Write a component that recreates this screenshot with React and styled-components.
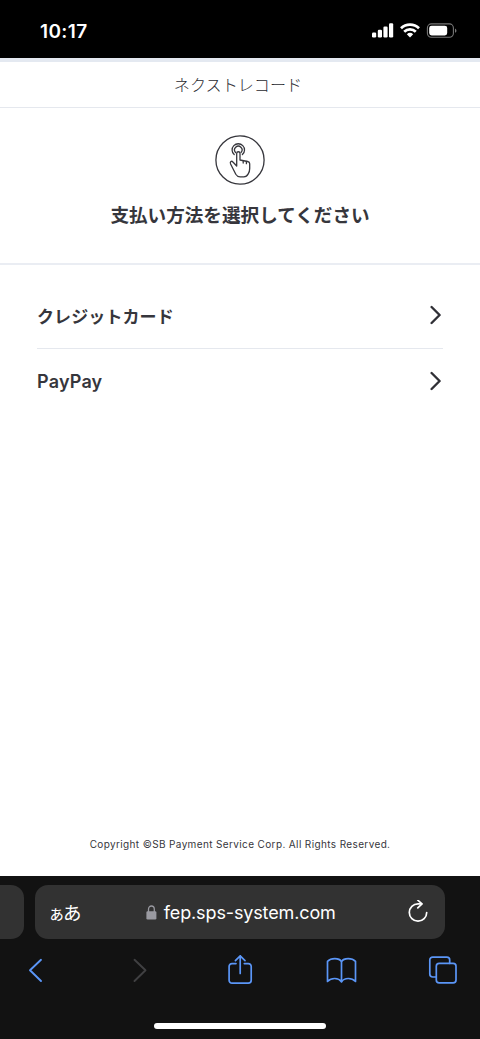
import React from 'react';
import styled, { createGlobalStyle } from 'styled-components';

const METHODS = [
  { id: 'credit', label: 'クレジットカード', size: '17px', spacing: '0.1px' },
  { id: 'paypay', label: 'PayPay', size: '18px', spacing: '0.2px' },
];

const StatusIcons = () => (
  <svg width="88" height="18" viewBox="0 0 88 18" aria-hidden="true">
    <g fill="#fff">
      <rect x="2" y="10.5" width="4.2" height="5" rx="1.2" />
      <rect x="7.8" y="7.8" width="4.2" height="7.7" rx="1.2" />
      <rect x="13.4" y="4.5" width="4.2" height="11" rx="1.2" />
      <rect x="19" y="1.2" width="4.2" height="14.3" rx="1.2" />
    </g>
    <g fill="none" stroke="#fff" strokeWidth="2.7">
      <path d="M31 6.2a13 13 0 0 1 18 0" />
      <path d="M34.2 9.7a8.2 8.2 0 0 1 11.6 0" />
    </g>
    <path d="M36.8 12.2a4.8 4.8 0 0 1 6.4 0L40 15.5z" fill="#fff" />
    <rect x="57.4" y="1.9" width="26" height="13.4" rx="4" fill="none" stroke="#777" strokeWidth="1.1" />
    <rect x="59.2" y="3.7" width="18" height="9.8" rx="2.4" fill="#fff" />
    <path d="M85 6.4c2 .8 2 3.6 0 4.4z" fill="#777" />
  </svg>
);

const TapIcon = () => (
  <svg width="50" height="50" viewBox="0 0 50 50" fill="none" stroke="#37373d" strokeLinejoin="round" strokeLinecap="round" aria-hidden="true">
    <circle cx="25" cy="25" r="24.1" strokeWidth="1.3" />
    <g strokeWidth="1.3">
      <path d="M19.2 19.6a6.2 6.2 0 1 1 8.2 0" />
      <path d="M20.6 17.5a3.7 3.7 0 1 1 5.4 0" />
      <path d="M21.7 31V18.4c0-2.2 3.3-2.2 3.3 0V25l7.6 1.500c1.300.3 2.100 1 2.100 2.300v4.600c0 2.200-.6 4-1.500 5.500-1.100 2-2.400 2.900-4.300 2.900h-3.800c-2 0-3.400-.9-4.300-2.500L15.600 29c-1-2.500 1-3.500 2.300-2z" />
      <path d="M28.2 25.8V28M31.4 26.500v2.200" />
    </g>
  </svg>
);

const ChevronIcon = () => (
  <svg width="12" height="20" viewBox="0 0 12 20" fill="none" stroke="#303036" strokeWidth="2.4" strokeLinecap="round" strokeLinejoin="round" aria-hidden="true">
    <path d="m1.6 2 8 8-8 8" />
  </svg>
);

const LockIcon = () => (
  <svg width="11" height="15" viewBox="0 0 11 15" aria-hidden="true">
    <rect x="0.4" y="6.2" width="10" height="8.3" rx="1.2" fill="#9999a0" />
    <path d="M2.500 7V4.200a2.900 3.200 0 0 1 5.800 0V7" fill="none" stroke="#9999a0" strokeWidth="1.3" />
  </svg>
);

const ReloadIcon = () => (
  <svg width="20" height="24" viewBox="0 0 20 24" fill="none" stroke="#fff" strokeWidth="1.7" strokeLinecap="round" strokeLinejoin="round" aria-hidden="true">
    <path d="M18.700 12.500a8.700 8.700 0 1 1-8.700-8.700h3.500" />
    <path d="m9.800.2 4.200 3.700-4.200 4" />
  </svg>
);

const BackIcon = () => (
  <ToolIcon $color="#5b96f7" $stroke={1.9}>
    <path d="M20 4.8 9 15.300 20 26" />
  </ToolIcon>
);

const ForwardIcon = () => (
  <ToolIcon $color="#404042" $stroke={1.9}>
    <path d="m11.500 4.800 11 10.500-11 10.700" />
  </ToolIcon>
);

const ShareIcon = () => (
  <ToolIcon $color="#5b96f7">
    <path d="M11 8.600H7A2.900 2.900 0 0 0 4.100 11.500v13.800a2.900 2.900 0 0 0 2.900 2.900h16.300a2.900 2.900 0 0 0 2.900-2.900V11.500a2.900 2.900 0 0 0-2.900-2.900h-4" />
    <path d="M15.200 18.500V.8m-4.800 4.900 4.800-4.900 4.800 4.900" />
  </ToolIcon>
);

const BookIcon = () => (
  <ToolIcon $color="#5b96f7">
    <path d="M15.500 6.600C13 2.700 5 2.800 1.500 6.400v20c3.800-3.900 11-3.900 14 .3V6.600Z" />
    <path d="M15.500 6.600c2.500-3.900 10.500-3.800 14-.2v20c-3.800-3.900-11-3.900-14 .3" />
  </ToolIcon>
);

const TabsIcon = () => (
  <ToolIcon $color="#5b96f7">
    <path d="M8 22H4.700a2.900 2.900 0 0 1-2.900-2.900V5a2.900 2.900 0 0 1 2.900-2.900h14.100a2.900 2.900 0 0 1 2.900 2.900v3.300" />
    <rect x="8.300" y="8.400" width="19.700" height="19.500" rx="2.900" />
  </ToolIcon>
);

const App = () => {
  return (
    <>
      <GlobalStyle />
      <Screen>
        <StatusBar>
          <Clock>10:17</Clock>
          <StatusIcons />
        </StatusBar>

        <Page>
          <ShopHeader>ネクストレコード</ShopHeader>

          <Intro>
            <TapIcon />
            <Title>支払い方法を選択してください</Title>
          </Intro>

          <MethodList>
            {METHODS.map((method) => (
              <MethodItem key={method.id}>
                <MethodButton type="button">
                  <MethodLabel $size={method.size} $spacing={method.spacing}>{method.label}</MethodLabel>
                  <ChevronIcon />
                </MethodButton>
              </MethodItem>
            ))}
          </MethodList>

          <Copyright>Copyright ©SB Payment Service Corp. All Rights Reserved.</Copyright>
        </Page>

        <BrowserBar>
          <AddressRow>
            <PreviousTab />
            <AddressField>
              <TextSize><small>ぁ</small>あ</TextSize>
              <Address>
                <LockIcon />
                <span>fep.sps-system.com</span>
              </Address>
              <ReloadIcon />
            </AddressField>
          </AddressRow>
          <Toolbar>
            <BackIcon />
            <ForwardIcon />
            <ShareIcon />
            <BookIcon />
            <TabsIcon />
          </Toolbar>
          <HomeIndicator />
        </BrowserBar>
      </Screen>
    </>
  );
};

const GlobalStyle = createGlobalStyle`
  * {
    box-sizing: border-box;
  }

  body {
    margin: 0;
    background: #fff;
    font-family: Inter, 'Noto Sans CJK JP', sans-serif;
  }

  svg {
    display: block;
    flex-shrink: 0;
  }
`;

const Screen = styled.div`
  display: flex;
  flex-direction: column;
  width: 480px;
  height: 1039px;
  overflow: hidden;
`;

const StatusBar = styled.header`
  display: flex;
  align-items: center;
  justify-content: space-between;
  height: 58px;
  padding: 4px 22px 0 40px;
  background: #000;
`;

const Clock = styled.span`
  color: #fff;
  font-size: 19px;
  font-weight: 600;
  letter-spacing: 0.4px;
`;

const Page = styled.main`
  display: flex;
  flex: 1;
  flex-direction: column;
  border-top: 4px solid #e4e9f1;
  color: #36363c;
`;

const ShopHeader = styled.div`
  height: 46px;
  padding-right: 4px;
  border-bottom: 1px solid #e5e8ee;
  color: #2a2a30;
  font-size: 16.1px;
  font-weight: 300;
  line-height: 47px;
  text-align: center;
`;

const Intro = styled.section`
  display: flex;
  flex-direction: column;
  align-items: center;
  height: 157px;
  padding-top: 27px;
  border-bottom: 2px solid #eaedf3;
`;

const Title = styled.h1`
  margin: 16px 0 0;
  font-size: 18.6px;
  font-weight: 600;
  line-height: 28px;
  white-space: nowrap;
`;

const MethodList = styled.ul`
  margin: 0;
  padding: 18px 37px 0;
  list-style: none;
`;

const MethodItem = styled.li`
  & + & {
    border-top: 1px solid #e5e8ee;
  }
`;

const MethodButton = styled.button`
  display: flex;
  align-items: center;
  justify-content: space-between;
  width: 100%;
  height: 65px;
  padding: 0 1px 2px 0;
  border: none;
  background: none;
  color: #36363c;
  font-family: inherit;
  cursor: pointer;
`;

const MethodLabel = styled.span`
  padding-top: 1px;
  font-size: ${({ $size }) => $size};
  font-weight: 600;
  letter-spacing: ${({ $spacing }) => $spacing};
`;

const Copyright = styled.footer`
  margin-top: auto;
  padding-bottom: 24px;
  font-size: 10px;
  line-height: 16px;
  letter-spacing: 0.37px;
  text-align: center;
  white-space: nowrap;
`;

const BrowserBar = styled.footer`
  height: 163px;
  background: #121212;
`;

const AddressRow = styled.div`
  display: flex;
  gap: 11px;
  padding-top: 9px;
`;

const PreviousTab = styled.div`
  width: 24px;
  height: 54px;
  border-radius: 0 13px 13px 0;
  background: #323232;
`;

const AddressField = styled.div`
  display: flex;
  align-items: center;
  justify-content: space-between;
  width: 410px;
  height: 54px;
  padding: 0 17px 0 13px;
  border-radius: 13px;
  background: #323232;
  color: #fff;
`;

const TextSize = styled.span`
  margin-right: -6px;
  padding-top: 3px;
  font-size: 18.5px;
  line-height: 24px;
  letter-spacing: -2px;
  white-space: nowrap;

  small {
    font-size: 17px;
  }
`;

const Address = styled.div`
  display: flex;
  align-items: center;
  gap: 7px;
  font-size: 18px;
  letter-spacing: -0.13px;
  white-space: nowrap;
`;

const Toolbar = styled.nav`
  display: flex;
  justify-content: space-between;
  padding: 16px 22px 0 21px;
`;

const ToolIcon = styled.svg.attrs({ viewBox: '0 0 30 30', 'aria-hidden': true })`
  width: 30px;
  height: 30px;
  overflow: visible;
  fill: none;
  stroke: ${({ $color }) => $color};
  stroke-width: ${({ $stroke }) => $stroke || 1.7};
  stroke-linecap: round;
  stroke-linejoin: round;
`;

const HomeIndicator = styled.div`
  width: 172px;
  height: 6px;
  margin: 38px auto 0;
  border-radius: 3px;
  background: #fff;
`;

export default App;
